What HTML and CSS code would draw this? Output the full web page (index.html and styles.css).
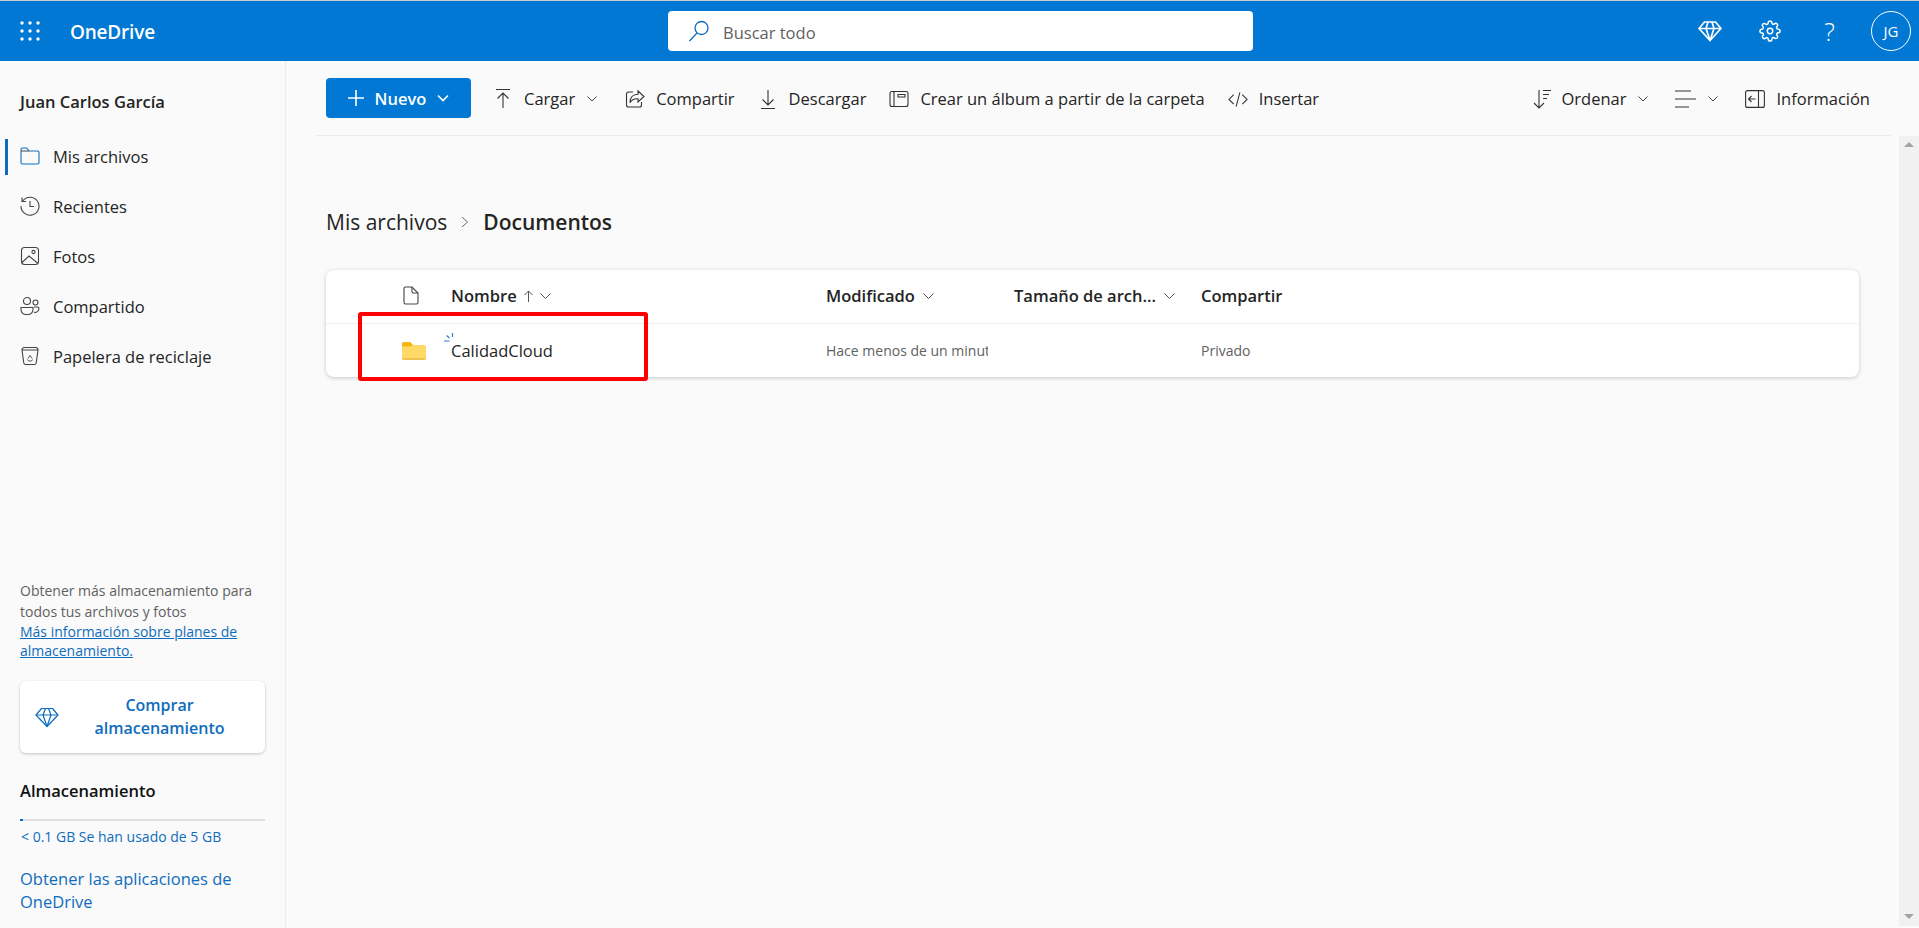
FILE: index.html
```html
<!DOCTYPE html>
<html lang="es">
<head>
    <meta charset="UTF-8">
    <meta name="viewport" content="width=device-width, initial-scale=1.0">
    <title>Mis archivos - OneDrive</title>
    <link rel="stylesheet" href="styles.css">
</head>
<body>
    <header class="topbar">
        <div class="brand">
            <svg class="waffle" width="20" height="20" viewBox="0 0 20 20" fill="#fff">
                <circle cx="2" cy="2" r="1.7"/><circle cx="10" cy="2" r="1.7"/><circle cx="18" cy="2" r="1.7"/>
                <circle cx="2" cy="10" r="1.7"/><circle cx="10" cy="10" r="1.7"/><circle cx="18" cy="10" r="1.7"/>
                <circle cx="2" cy="18" r="1.7"/><circle cx="10" cy="18" r="1.7"/><circle cx="18" cy="18" r="1.7"/>
            </svg>
            <span class="brand-name">OneDrive</span>
        </div>
        <div class="search">
            <svg width="22" height="22" viewBox="0 0 22 22" fill="none" stroke="#0f6cbd" stroke-width="1.3">
                <circle cx="13.5" cy="8" r="6.5"/><path d="M9 13 1.5 21"/>
            </svg>
            <span>Buscar todo</span>
        </div>
        <div class="top-actions">
            <span class="top-slot">
                <svg width="24" height="22" viewBox="0 0 24 22" fill="none" stroke="#fff" stroke-width="1.7" stroke-linejoin="round">
                    <path d="M6.5 2h11L23 8.5 12 20.5 1 8.5z"/><path d="M1 8.5h22M8 8.5 12 20.5l4-12M8 8.5 10 2M16 8.5 14 2"/>
                </svg>
            </span>
            <span class="top-slot">
                <svg width="22" height="22" viewBox="0 0 24 24" fill="none" stroke="#fff" stroke-width="1.6">
                    <circle cx="12" cy="12" r="3"/>
                    <path d="M19.4 15a1.65 1.65 0 0 0 .33 1.82l.06.06a2 2 0 0 1 0 2.83 2 2 0 0 1-2.83 0l-.06-.06a1.65 1.65 0 0 0-1.82-.33 1.65 1.65 0 0 0-1 1.51V21a2 2 0 0 1-2 2 2 2 0 0 1-2-2v-.09A1.65 1.65 0 0 0 9 19.4a1.65 1.65 0 0 0-1.82.33l-.06.06a2 2 0 0 1-2.83 0 2 2 0 0 1 0-2.83l.06-.06a1.65 1.65 0 0 0 .33-1.82 1.65 1.65 0 0 0-1.51-1H3a2 2 0 0 1-2-2 2 2 0 0 1 2-2h.09A1.65 1.65 0 0 0 4.6 9a1.65 1.65 0 0 0-.33-1.82l-.06-.06a2 2 0 0 1 0-2.83 2 2 0 0 1 2.83 0l.06.06a1.65 1.65 0 0 0 1.82.33H9a1.65 1.65 0 0 0 1-1.51V3a2 2 0 0 1 2-2 2 2 0 0 1 2 2v.09a1.65 1.65 0 0 0 1 1.51 1.65 1.65 0 0 0 1.82-.33l.06-.06a2 2 0 0 1 2.83 0 2 2 0 0 1 0 2.83l-.06.06a1.65 1.65 0 0 0-.33 1.82V9a1.65 1.65 0 0 0 1.51 1H21a2 2 0 0 1 2 2 2 2 0 0 1-2 2h-.09a1.65 1.65 0 0 0-1.51 1z"/>
                </svg>
            </span>
            <span class="top-slot help">?</span>
            <span class="avatar">JG</span>
        </div>
    </header>

    <div class="layout">
        <aside class="sidebar">
            <div class="user-name">Juan Carlos García</div>
            <nav class="nav">
                <a class="nav-item active">
                    <svg width="20" height="20" viewBox="0 0 20 20" fill="none" stroke="#0f6cbd" stroke-width="1.1">
                        <path d="M1 5V3.500A1.500 1.500 0 0 1 2.500 2h4.200l2.400 3h8.400A1.500 1.500 0 0 1 19 6.500v10a1.500 1.500 0 0 1-1.500 1.500h-15A1.500 1.500 0 0 1 1 16.500z"/><path d="M1 5h8" stroke="#555"/>
                    </svg>
                    Mis archivos
                </a>
                <a class="nav-item">
                    <svg width="20" height="20" viewBox="0 0 20 20" fill="none" stroke="#444" stroke-width="1.1">
                        <path d="M2.500 5.200A9 9 0 1 1 1 10"/><path d="M2 1.500v4h4M10 5v5.500h4"/>
                    </svg>
                    Recientes
                </a>
                <a class="nav-item">
                    <svg width="20" height="20" viewBox="0 0 20 20" fill="none" stroke="#444" stroke-width="1.1">
                        <rect x="1.500" y="1.500" width="17" height="17" rx="3"/><circle cx="13.500" cy="6" r="1.600"/><path d="M2 16.500 9 10l8.500 7"/>
                    </svg>
                    Fotos
                </a>
                <a class="nav-item">
                    <svg width="20" height="20" viewBox="0 0 20 20" fill="none" stroke="#444" stroke-width="1.1">
                        <circle cx="7" cy="5" r="3.500"/><circle cx="15.500" cy="6.500" r="2.500"/><path d="M1 11.500h12v2a5 5 0 0 1-5 5H6a5 5 0 0 1-5-5zM14 11h3.500a1.500 1.500 0 0 1 1.500 1.500 4 4 0 0 1-5 3.800"/>
                    </svg>
                    Compartido
                </a>
                <a class="nav-item">
                    <svg width="20" height="20" viewBox="0 0 20 20" fill="none" stroke="#444" stroke-width="1.1">
                        <path d="M2 4h16l-1.800 13a1.800 1.800 0 0 1-1.800 1.500H5.600A1.800 1.800 0 0 1 3.800 17zM2 4a2.500 2.500 0 0 1 2.500-2.500h11A2.500 2.500 0 0 1 18 4"/><path d="M8 12.500l2-3 2 3M7.500 13.500 8.500 15h3l1-1.500" stroke-width="0.9"/>
                    </svg>
                    Papelera de reciclaje
                </a>
            </nav>
            <div class="side-bottom">
                <p class="promo">Obtener más almacenamiento para todos tus archivos y fotos</p>
                <a class="promo-link">Más información sobre planes de almacenamiento.</a>
                <div class="buy-btn">
                    <svg width="24" height="22" viewBox="0 0 24 22" fill="none" stroke="#0f6cbd" stroke-width="1.2" stroke-linejoin="round">
                        <path d="M6.500 2.500h11L23 9 12 20.500 1 9z"/><path d="M1 9h22M8 9l4 11.500L16 9M8 9l2.500-6.500M16 9l-2.500-6.500"/>
                    </svg>
                    <span>Comprar almacenamiento</span>
                </div>
                <div class="storage-title">Almacenamiento</div>
                <div class="storage-bar"><div class="storage-fill" style="width: 3px"></div></div>
                <div class="storage-text">&lt; 0.1 GB Se han usado de 5 GB</div>
                <a class="apps-link">Obtener las aplicaciones de OneDrive</a>
            </div>
        </aside>

        <main class="main">
            <div class="toolbar">
                <button class="new-btn">
                    <svg width="16" height="16" viewBox="0 0 16 16" stroke="#fff" stroke-width="1.6"><path d="M8 0v16M0 8h16"/></svg>
                    <span>Nuevo</span>
                    <svg width="12" height="8" viewBox="0 0 12 8" fill="none" stroke="#fff" stroke-width="1.6"><path d="M1 1.500 6 6.500l5-5"/></svg>
                </button>
                <a class="tool">
                    <svg width="20" height="20" viewBox="0 0 20 20" fill="none" stroke="#333" stroke-width="1.1"><path d="M3 .5h14M10 19V4M4.500 9.500 10 4l5.500 5.500"/></svg>
                    Cargar
                    <svg class="chev" width="10" height="6" viewBox="0 0 10 6" fill="none" stroke="#444"><path d="M.5.500 5 5 9.500.500"/></svg>
                </a>
                <a class="tool">
                    <svg width="20" height="20" viewBox="0 0 20 20" fill="none" stroke="#333" stroke-width="1.1"><path d="M8 3H3.500A2 2 0 0 0 1.500 5v11a2 2 0 0 0 2 2h11a2 2 0 0 0 2-2v-3"/><path d="M13 2l6 5.500-6 5.500V9.800c-4-.3-6.500 1.200-8 4 0-5 2.500-8.300 8-8.500z"/></svg>
                    Compartir
                </a>
                <a class="tool">
                    <svg width="20" height="20" viewBox="0 0 20 20" fill="none" stroke="#333" stroke-width="1.1"><path d="M3 19.500h14M10 1v15M4.500 10.500 10 16l5.500-5.500"/></svg>
                    Descargar
                </a>
                <a class="tool">
                    <svg width="20" height="20" viewBox="0 0 20 20" fill="none" stroke="#333" stroke-width="1.1"><rect x="1" y="2.500" width="18" height="15" rx="2"/><path d="M5 2.500v15M9 5.500h7v2.500H9z"/></svg>
                    Crear un álbum a partir de la carpeta
                </a>
                <a class="tool">
                    <svg width="20" height="20" viewBox="0 0 21 20" fill="none" stroke="#333" stroke-width="1.1"><path d="M6 5.500 1 10.500l5 5M15 5.500l5 5-5 5M12.500 3l-4 15"/></svg>
                    Insertar
                </a>
                <div class="toolbar-right">
                    <a class="tool">
                        <svg width="18" height="20" viewBox="0 0 18 20" fill="none" stroke="#333" stroke-width="1.1"><path d="M6 1v18M1 14l5 5 5-5M10 1.500h8M10 5.500h6M10 9.500h4"/></svg>
                        Ordenar
                        <svg class="chev" width="10" height="6" viewBox="0 0 10 6" fill="none" stroke="#444"><path d="M.5.500 5 5 9.500.500"/></svg>
                    </a>
                    <a class="tool">
                        <svg width="21" height="18" viewBox="0 0 21 18" fill="none" stroke="#333" stroke-width="1.2"><path d="M0 1h16M0 9h21M0 17h14"/></svg>
                        <svg class="chev" width="10" height="6" viewBox="0 0 10 6" fill="none" stroke="#444"><path d="M.5.500 5 5 9.500.500"/></svg>
                    </a>
                    <a class="tool">
                        <svg width="20" height="18" viewBox="0 0 20 18" fill="none" stroke="#333" stroke-width="1.1"><rect x=".6" y=".6" width="18.800" height="16.800" rx="2"/><path d="M13.500 1v16M10.500 9H3.500M6.500 6l-3 3 3 3"/></svg>
                        Información
                    </a>
                </div>
            </div>

            <div class="content">
                <div class="content-inner">
                    <div class="breadcrumb">
                        <span class="crumb">Mis archivos</span>
                        <svg width="8" height="12" viewBox="0 0 8 12" fill="none" stroke="#666"><path d="M1 1l5.500 5L1 11"/></svg>
                        <span class="crumb current">Documentos</span>
                    </div>

                    <div class="file-list">
                        <div class="file-row head">
                            <div class="col-icon">
                                <svg width="16" height="19" viewBox="0 0 16 19" fill="none" stroke="#444" stroke-width="1.1"><path d="M1 2.500A1.500 1.500 0 0 1 2.500 1H9l6 6v9.500a1.500 1.500 0 0 1-1.500 1.500h-11A1.500 1.500 0 0 1 1 16.500z"/><path d="M9 1v4.500A1.500 1.500 0 0 0 10.500 7H15"/></svg>
                            </div>
                            <div class="col">Nombre
                                <svg class="sort-arrow" width="9" height="12" viewBox="0 0 9 12" fill="none" stroke="#555"><path d="M4.500 12V1M.5 5l4-4 4 4"/></svg>
                                <svg class="col-chev tight" width="11" height="6" viewBox="0 0 11 6" fill="none" stroke="#555"><path d="M.5.500l5 5 5-5"/></svg>
                            </div>
                            <div class="col">Modificado
                                <svg class="col-chev" width="11" height="6" viewBox="0 0 11 6" fill="none" stroke="#555"><path d="M.5.500l5 5 5-5"/></svg>
                            </div>
                            <div class="col">Tamaño de arch...
                                <svg class="col-chev" width="11" height="6" viewBox="0 0 11 6" fill="none" stroke="#555"><path d="M.5.500l5 5 5-5"/></svg>
                            </div>
                            <div class="col">Compartir</div>
                        </div>
                        <div class="file-row">
                            <div class="col-icon">
                                <svg width="24" height="19" viewBox="0 0 24 19">
                                    <path d="M0 3a2 2 0 0 1 2-2h6l3 3h11a2 2 0 0 1 2 2v11a2 2 0 0 1-2 2H2a2 2 0 0 1-2-2z" fill="#ffd968"/>
                                    <path d="M0 3a2 2 0 0 1 2-2h6l3 3-3 1.500H0z" fill="#f5b50f"/>
                                    <path d="M0 17h24a2 2 0 0 1-2 2H2a2 2 0 0 1-2-2z" fill="#f0c44c"/>
                                </svg>
                            </div>
                            <div class="col name">
                                <svg class="sync" width="10" height="11" viewBox="0 0 10 11" fill="none" stroke="#2f7fd6" stroke-width="1.2"><path d="M8.500 0v4M2.500 2.500l3 2.500M0 8h5.500"/></svg>
                                CalidadCloud
                            </div>
                            <div class="col meta modified">Hace menos de un minuto</div>
                            <div class="col meta"></div>
                            <div class="col meta">Privado</div>
                        </div>
                        <div class="highlight"></div>
                    </div>
                </div>
                <div class="scrollbar">
                    <span class="arrow-up"></span>
                    <span class="arrow-down"></span>
                </div>
            </div>
        </main>
    </div>
</body>
</html>
```

FILE: styles.css
```css
* {
    box-sizing: border-box;
}

html, body {
    height: 100%;
}

body {
    margin: 0;
    display: flex;
    flex-direction: column;
    overflow: hidden;
    font-family: "Open Sans", "Noto Sans", sans-serif;
    font-size: 16.5px;
    color: #242424;
    background: #fafafa;
    border-top: 1px solid #c8ccd0;
}

svg {
    flex: none;
    display: block;
}

/* top bar */
.topbar {
    flex: none;
    height: 60px;
    display: grid;
    grid-template-columns: 668px 585px 1fr;
    align-items: center;
    background: #0078d4;
    color: #fff;
}

.brand {
    display: flex;
    align-items: center;
    padding-left: 20px;
}

.brand-name {
    margin-left: 30px;
    padding-top: 2px;
    font-size: 19px;
    font-weight: 600;
    letter-spacing: -0.2px;
}

.search {
    height: 40px;
    display: flex;
    align-items: center;
    gap: 13px;
    padding-left: 20px;
    background: #fff;
    border-radius: 4px;
    color: #616161;
}

.search span {
    padding-top: 2px;
}

.top-actions {
    display: flex;
    align-items: center;
    justify-content: flex-end;
    padding-right: 8px;
}

.top-slot {
    width: 60px;
    display: flex;
    justify-content: center;
    padding-right: 2px;
}

.help {
    font-size: 25px;
    font-weight: 300;
    line-height: 30px;
    padding-right: 3px;
}

.avatar {
    width: 40px;
    height: 40px;
    margin-left: 10px;
    display: flex;
    align-items: center;
    justify-content: center;
    border: 1px solid #fff;
    border-radius: 50%;
    font-size: 15px;
}

/* page body */
.layout {
    flex: 1;
    display: flex;
    min-height: 0;
}

.sidebar {
    flex: none;
    width: 286px;
    display: flex;
    flex-direction: column;
    padding-bottom: 15px;
    border-right: 1px solid #ececec;
}

.user-name {
    margin: 30px 0 0 20px;
    line-height: 22px;
    font-weight: 600;
}

.nav {
    margin-top: 18px;
}

.nav-item {
    position: relative;
    height: 50px;
    display: flex;
    align-items: center;
    gap: 13px;
    padding-left: 20px;
}

.nav-item.active::before {
    content: "";
    position: absolute;
    left: 5px;
    top: 8px;
    width: 3px;
    height: 36px;
    background: #0f6cbd;
}

.side-bottom {
    margin-top: auto;
    padding: 0 20px;
}

.promo {
    margin: 0;
    font-size: 14px;
    line-height: 21px;
    color: #616161;
}

.promo-link {
    display: block;
    font-size: 14px;
    line-height: 19px;
    color: #0f6cbd;
    text-decoration: underline;
}

.buy-btn {
    height: 72px;
    margin-top: 21px;
    display: flex;
    align-items: center;
    padding: 0 15px;
    background: #fff;
    border-radius: 6px;
    box-shadow: 0 1px 3px rgba(0, 0, 0, 0.22);
    color: #0f6cbd;
    font-size: 16px;
    font-weight: 600;
    line-height: 23px;
    text-align: center;
}

.buy-btn span {
    flex: 1;
    padding: 0 4px 0 14px;
}

.storage-title {
    margin-top: 27px;
    line-height: 22px;
    font-weight: 600;
    color: #111;
}

.storage-bar {
    height: 2px;
    margin-top: 17px;
    background: #e0e0e0;
}

.storage-fill {
    height: 2px;
    background: #0f6cbd;
}

.storage-text {
    margin-top: 6px;
    padding-left: 1px;
    font-size: 14px;
    line-height: 20px;
    color: #0f6cbd;
}

.apps-link {
    display: block;
    margin-top: 20px;
    line-height: 23px;
    color: #0f6cbd;
}

/* toolbar */
.main {
    flex: 1;
    min-width: 0;
    display: flex;
    flex-direction: column;
}

.toolbar {
    flex: none;
    height: 75px;
    margin: 0 28px 0 30px;
    padding: 0 21px 0 10px;
    display: flex;
    align-items: center;
    gap: 23px;
    border-bottom: 1px solid #ebebeb;
}

.toolbar-right {
    margin-left: auto;
    display: flex;
    align-items: center;
    gap: 27px;
}

.new-btn {
    width: 145px;
    height: 40px;
    margin-right: -1px;
    display: flex;
    align-items: center;
    justify-content: center;
    gap: 11px;
    padding: 0;
    border: none;
    border-radius: 4px;
    background: #0078d4;
    color: #fff;
    font: inherit;
    font-weight: 600;
}

.tool {
    display: flex;
    align-items: center;
    gap: 11px;
    line-height: 24px;
    padding-top: 1px;
    white-space: nowrap;
}

.chev {
    margin-left: 1px;
}

.toolbar > .tool .chev {
    margin-right: 5px;
}

/* file list */
.content {
    flex: 1;
    min-height: 0;
    display: flex;
}

.content-inner {
    flex: 1;
    min-width: 0;
    padding: 71px 40px 0 40px;
}

.breadcrumb {
    display: flex;
    align-items: center;
    gap: 14px;
    line-height: 30px;
}

.crumb {
    font-size: 21px;
}

.crumb.current {
    font-weight: 600;
}

.file-list {
    position: relative;
    margin-top: 33px;
    background: #fff;
    border-radius: 8px;
    box-shadow: 0 1px 4px rgba(0, 0, 0, 0.2);
}

.file-row {
    height: 53px;
    display: grid;
    grid-template-columns: 125px 375px 188px 187px 1fr;
    align-items: center;
}

.file-row.head {
    height: 54px;
    padding-bottom: 2px;
    border-bottom: 1px solid #efefef;
    font-weight: 600;
}

.col-icon {
    display: flex;
    justify-content: flex-end;
    padding-right: 25px;
}

.head .col-icon {
    padding-right: 32px;
}

.col {
    position: relative;
    display: flex;
    align-items: center;
    white-space: nowrap;
    overflow: hidden;
}

.col.name {
    overflow: visible;
}

.sync {
    position: absolute;
    left: -7px;
    top: -6px;
}

.sort-arrow {
    margin-left: 7px;
}

.col-chev {
    margin-left: 8px;
}

.col-chev.tight {
    margin-left: 7px;
}

.head .col {
    padding-right: 10px;
}

.meta {
    font-size: 14px;
    color: #616161;
}

.modified {
    width: 162px;
}

.highlight {
    position: absolute;
    left: 32px;
    top: 42px;
    width: 290px;
    height: 69px;
    border: 4px solid #ff0000;
    border-radius: 3px;
}

.scrollbar {
    position: relative;
    flex: none;
    width: 20px;
    margin-bottom: 2px;
    background: #f1f1f1;
}

.arrow-up, .arrow-down {
    position: absolute;
    left: 5px;
    width: 0;
    height: 0;
    border-left: 5px solid transparent;
    border-right: 5px solid transparent;
}

.arrow-up {
    top: 6px;
    border-bottom: 5px solid #a3a3a3;
}

.arrow-down {
    bottom: 7px;
    border-top: 5px solid #a3a3a3;
}
```
